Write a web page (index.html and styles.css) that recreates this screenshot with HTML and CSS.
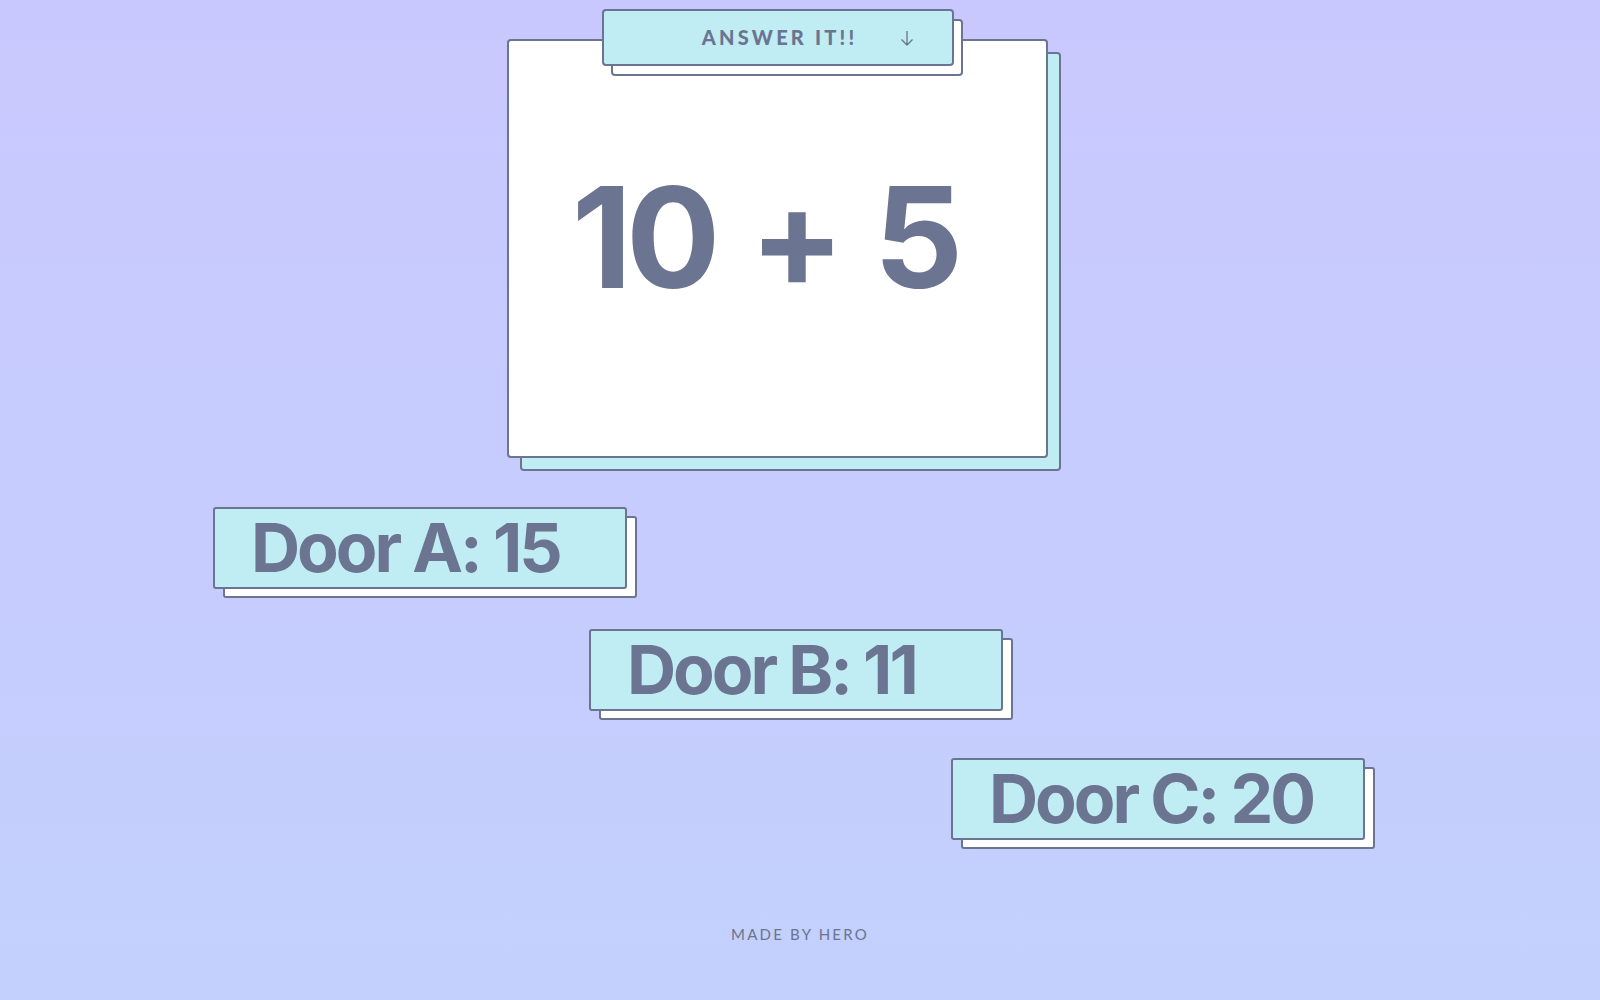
FILE: index.html
```html
<!DOCTYPE html>
<html lang="en">
<head>
<meta charset="utf-8">
<title>Answer it!!</title>
<link rel="stylesheet" href="styles.css">
</head>
<body>
<main class="page">
  <section class="card">
    <div class="tab">
      <span class="tab-label">ANSWER IT!!</span>
      <svg class="tab-arrow" width="14" height="16" viewBox="0 0 14 16" aria-hidden="true">
        <path d="M7 1 V15 M1.5 9.5 L7 15 L12.5 9.5" fill="none" stroke="#6b7490" stroke-width="1.3"/>
      </svg>
    </div>
    <div class="equation">10 + 5</div>
  </section>
  <div class="doors">
    <div class="door door-a">Door A: 15</div>
    <div class="door door-b">Door B: 11</div>
    <div class="door door-c">Door C: 20</div>
  </div>
  <footer class="credit">MADE BY HERO</footer>
</main>
</body>
</html>
```

FILE: styles.css
```css
html, body {
  margin: 0;
  padding: 0;
}
body {
  min-height: 1000px;
  background: linear-gradient(180deg, #c9c8fe 0%, #c3d0fd 100%);
  font-family: "Lato", "Inter", sans-serif;
  color: #6b7490;
}
.page {
  padding-top: 39px;
  display: flex;
  flex-direction: column;
  align-items: flex-start;
}
.card {
  position: relative;
  box-sizing: border-box;
  width: 541px;
  height: 419px;
  margin-left: 507px;
  background: #ffffff;
  border: 2px solid #6b7490;
  border-radius: 4px;
  box-shadow: 13px 13px 0 -2px #c0ecf3, 13px 13px 0 0 #6b7490;
}
.tab {
  position: absolute;
  top: -32px;
  left: 93px;
  box-sizing: border-box;
  width: 352px;
  height: 57px;
  background: #c0ecf3;
  border: 2px solid #6b7490;
  border-radius: 4px;
  box-shadow: 9px 10px 0 -2px #ffffff, 9px 10px 0 0 #6b7490;
  display: grid;
  grid-template-columns: 1fr auto 1fr;
  align-items: center;
}
.tab-label {
  grid-column: 2;
  font-size: 20px;
  font-weight: 900;
  letter-spacing: 3.2px;
  margin-right: -3.2px;
  line-height: 1;
  margin-top: -2px;
}
.tab-arrow {
  grid-column: 3;
  justify-self: start;
  margin-left: 46px;
  margin-top: 1px;
}
.equation {
  padding-top: 126px;
  padding-right: 26px;
  text-align: center;
  font-family: "Inter", "Lato", sans-serif;
  font-size: 140px;
  font-weight: 700;
  line-height: 1;
  letter-spacing: -6px;
  word-spacing: 8px;
}
.doors {
  margin-top: 49px;
  display: flex;
  flex-direction: column;
  align-items: flex-start;
}
.door {
  box-sizing: border-box;
  width: 414px;
  height: 82px;
  padding-left: 36px;
  background: #c0ecf3;
  border: 2px solid #6b7490;
  border-radius: 3px;
  box-shadow: 10px 9px 0 -2px #ffffff, 10px 9px 0 0 #6b7490;
  font-family: "Inter", "Lato", sans-serif;
  font-size: 68px;
  font-weight: 700;
  line-height: 77px;
  letter-spacing: -3px;
  white-space: nowrap;
}
.door-a {
  margin-left: 213px;
}
.door-b {
  margin-left: 589px;
  margin-top: 40px;
}
.door-c {
  margin-left: 951px;
  margin-top: 47px;
}
.credit {
  align-self: stretch;
  margin-top: 84px;
  text-align: center;
  font-size: 15px;
  font-weight: 400;
  letter-spacing: 2.2px;
  line-height: 20px;
}
```
